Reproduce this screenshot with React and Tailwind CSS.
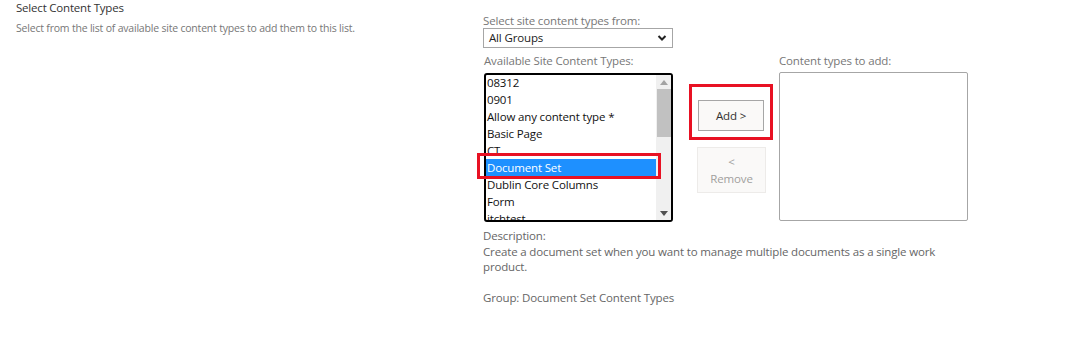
import React from "react";

const items = [
  "08312",
  "0901",
  "Allow any content type *",
  "Basic Page",
  "CT",
  "Document Set",
  "Dublin Core Columns",
  "Form",
  "itchtest",
];

export default function App() {
  return (
    <div className="w-[1087px] h-[354px] bg-white flex font-['Segoe_UI','Open_Sans',sans-serif] overflow-hidden">
      {/* Left column */}
      <div className="w-[483px] pl-4 shrink-0">
        <div className="text-[11.5px] leading-[15px] tracking-[-0.2px] text-[#333333]">Select Content Types</div>
        <div className="mt-[6px] text-[10.5px] leading-[14px] tracking-[-0.2px] text-[#777777]">
          Select from the list of available site content types to add them to this list.
        </div>
      </div>

      {/* Right area */}
      <div className="w-[490px] shrink-0 pt-[13px] text-[11.5px] tracking-[-0.15px]">
        <div className="leading-[15px] text-[#777777]">Select site content types from:</div>
        <div className="w-[190px] h-[20px] border border-[#a6a6a6] flex items-center justify-between pl-[5px] pr-[5px] text-[#222222]">
          <span>All Groups</span>
          <svg width="10" height="8" viewBox="0 0 10 8">
            <polyline points="1.5,2 5,5.5 8.5,2" fill="none" stroke="#222" strokeWidth="2" />
          </svg>
        </div>

        <div className="flex mt-[5px]">
          {/* col 1 */}
          <div className="relative ml-[1px] w-[189px] shrink-0">
            <div className="leading-[15px] text-[#777777]">Available Site Content Types:</div>
            <div className="mt-[5px] h-[149px] border-2 border-black rounded-[3px] overflow-hidden flex">
              <div className="flex-1 -mt-[1.5px]">
                {items.map((it) => (
                  <div
                    key={it}
                    className={
                      it === "Document Set"
                        ? "h-[17px] leading-[17px] pl-[1px] bg-[#1e90ff] text-white whitespace-nowrap"
                        : "h-[17px] leading-[17px] pl-[1px] text-[#111111] whitespace-nowrap"
                    }
                  >
                    {it}
                  </div>
                ))}
              </div>
              <div className="w-[15px] bg-[#f0f0f0] flex flex-col items-center">
                <div className="h-[14px] flex items-center justify-center">
                  <svg width="8" height="5" viewBox="0 0 8 5">
                    <polygon points="0,5 8,5 4,0" fill="#a3a3a3" />
                  </svg>
                </div>
                <div className="ml-[1px] w-[14px] h-[48px] bg-[#c1c1c1]" />
                <div className="flex-1" />
                <div className="h-[14px] flex items-center justify-center">
                  <svg width="8" height="5" viewBox="0 0 8 5">
                    <polygon points="0,0 8,0 4,5" fill="#505050" />
                  </svg>
                </div>
              </div>
            </div>
            <div className="absolute left-[-7px] top-[100px] w-[184px] h-[26px] border-[3px] border-[#e81123]" />
          </div>

          {/* buttons */}
          <div className="ml-[16px] w-[84px] shrink-0 pt-[31px]">
            <div className="w-[84px] h-[56px] border-[3px] border-[#e81123] pt-[13px] pl-[6px]">
              <div className="w-[66px] h-[31px] border border-[#a6a6a6] bg-[#faf9f8] flex items-center justify-center text-[#323130]">
                Add &gt;
              </div>
            </div>
            <div className="ml-[8px] mt-[7px] w-[69px] h-[46px] border border-[#edebe9] bg-[#faf9f8] flex flex-col items-center justify-center leading-[17px] text-[#a19f9d]">
              <span>&lt;</span>
              <span>Remove</span>
            </div>
          </div>

          {/* col 3 */}
          <div className="ml-[6px] w-[189px] shrink-0">
            <div className="leading-[15px] text-[#777777]">Content types to add:</div>
            <div className="mt-[4px] h-[149px] border border-[#a6a6a6] rounded-[2px]" />
          </div>
        </div>

        <div className="mt-[6px] leading-[15.5px] text-[#666666]">
          <div>Description:</div>
          <div>
            Create a document set when you want to manage multiple documents as a single work
            <br />
            product.
          </div>
          <div className="h-[15.5px]" />
          <div>Group: Document Set Content Types</div>
        </div>
      </div>
    </div>
  );
}
